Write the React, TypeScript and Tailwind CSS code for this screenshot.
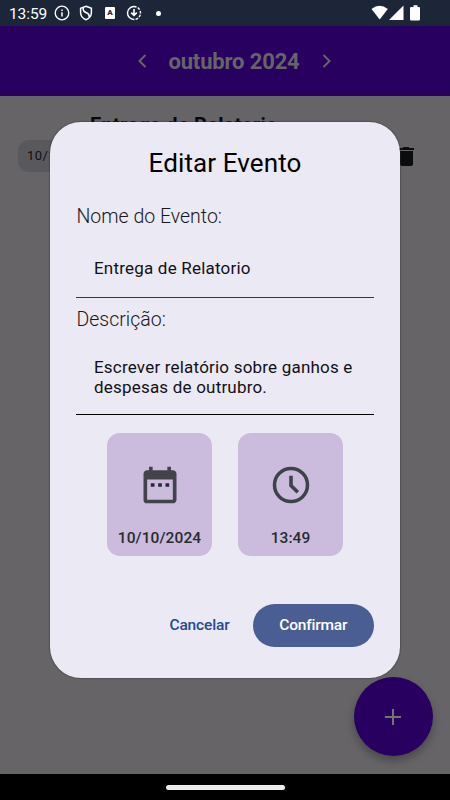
import React from "react";

function StatusBar() {
  return (
    <header className="flex h-[26px] w-full shrink-0 items-center bg-[#1d2639] pl-[9px] text-white">
      <span className="w-[38px] whitespace-nowrap pt-[2px] text-[15.5px] leading-[24px] tracking-[-0.1px]">13:59</span>
      <svg className="ml-[7px] h-4 w-4" viewBox="0 0 16 16" fill="none" stroke="currentColor">
        <circle cx="8" cy="8" r="6.8" strokeWidth="1.3" />
        <path d="M8 7.2v4.2M8 4.4v1.5" strokeWidth="1.5" />
      </svg>
      <svg className="ml-2 h-4 w-4" viewBox="0 0 16 16" fill="none" stroke="currentColor" strokeWidth="1.5">
        <path d="M8 1.2 13.4 3.2v4.2c0 3.5-2.3 6-5.4 7.4-3.1-1.4-5.4-3.9-5.4-7.4V3.2z" />
        <path d="M5.200 2.500c-.3 3 .8 4.500 3.300 5.300 2 .7 2.800 2 2.800 4.200" />
      </svg>
      <span className="ml-[11px] flex h-3 w-[10px] justify-center rounded-[1px] bg-white pt-[2px] text-[8px] font-black leading-[8px] text-[#1d2639]">A</span>
      <svg className="ml-[11px] h-4 w-4" viewBox="0 0 16 16" fill="none" stroke="currentColor">
        <path d="M8 1.500a6.500 6.500 0 0 0 0 13" strokeWidth="1.400" />
        <path d="M8 1.500a6.500 6.500 0 0 1 0 13" strokeWidth="1.400" strokeDasharray="2.600 1.300" />
        <path d="M8 4v6.500M5.200 7.600 8 10.400 10.800 7.600" strokeWidth="1.600" />
      </svg>
      <i className="ml-[14px] h-[5px] w-[5px] rounded-full bg-white" />
      <svg className="ml-auto mr-[26px] h-[18px] w-[54px]" viewBox="0 0 54 18" fill="currentColor">
        <path d="M1.500 5Q9.500-1.400 17.800 5L9.700 15.500z" />
        <path d="M19 16 33.500 1.500V16z" />
        <path d="M41 3h2.500V1.200h4V3H49q1 0 1 1v11.500q0 1-1 1h-8q-1 0-1-1V4q0-1 1-1z" />
      </svg>
    </header>
  );
}

function CalendarIcon() {
  return (
    <svg className="ml-px h-11 w-11" viewBox="0 0 24 24" fill="#42434d">
      <path d="M7 11h2v2H7zm4 0h2v2h-2zm4 0h2v2h-2z" fill="#222b31" />
      <path d="M19 4h-1V2h-2v2H8V2H6v2H5c-1.110 0-1.990.9-1.990 2L3 20a2 2 0 0 0 2 2h14c1.100 0 2-.9 2-2V6c0-1.100-.9-2-2-2m0 16H5V9h14z" />
    </svg>
  );
}

function ClockIcon() {
  return (
    <svg className="ml-px h-11 w-11" viewBox="0 0 44 44" fill="none" stroke="#3d434a">
      <circle cx="22" cy="22" r="16.500" strokeWidth="3.500" />
      <path d="M22 12.800v9.600l6.800 6.800" strokeWidth="3.600" />
    </svg>
  );
}

function PickerTile({ icon, label }: { icon: React.ReactNode; label: string }) {
  return (
    <button className="flex h-[123px] w-[105px] flex-col items-center rounded-[13px] bg-[#cbbbdc] pt-[30.500px] text-[#272c31]">
      {icon}
      <span className="mt-[20.500px] whitespace-nowrap pl-px text-[15.500px] font-medium leading-5 tracking-[0.08px]">{label}</span>
    </button>
  );
}

function EditDialog() {
  return (
    <section className="absolute left-[50px] top-[122px] flex h-[556px] w-[350px] flex-col rounded-[31px] bg-[#ebe9f3] px-[26px] pt-[25px] text-black shadow-[0_0_1px_1px_rgba(45,45,45,0.35)]">
      <h2 className="text-center text-[26px] font-normal leading-8 tracking-[0.1px]">Editar Evento</h2>
      <label className="mt-[26px] pl-[0.500px] text-[19.500px] font-light leading-6 text-[#18181c]">Nome do Evento:</label>
      <div className="flex h-[69px] items-center border-b border-[#36353f] pl-[18px] pt-[9px] text-[17px] leading-5 tracking-[0.2px] text-[#111116]">
        Entrega de Relatorio
      </div>
      <label className="mt-[10px] pl-[0.500px] text-[19.500px] font-light leading-6 text-[#18181c]">Descrição:</label>
      <div className="h-[83px] whitespace-pre-line border-b border-black pl-[18px] pt-[25px] text-[17px] leading-5 tracking-[0.2px] text-[#111116]">
        {"Escrever relatório sobre ganhos e\ndespesas de outrubro."}
      </div>
      <div className="mt-[17.500px] flex justify-center gap-[26px] pr-px">
        <PickerTile icon={<CalendarIcon />} label="10/10/2024" />
        <PickerTile icon={<ClockIcon />} label="13:49" />
      </div>
      <div className="mt-[48px] flex items-center justify-end gap-[23px]">
        <button className="pt-px text-[15.500px] font-medium tracking-[-0.15px] text-[#244a90]">Cancelar</button>
        <button className="h-[43.500px] w-[121.500px] rounded-full bg-[#4a5e94] pt-px text-[15.500px] font-medium tracking-[-0.2px] text-white">Confirmar</button>
      </div>
    </section>
  );
}

export default function App() {
  return (
    <div className="relative flex h-[800px] w-[450px] flex-col overflow-hidden bg-[#666466] font-[Roboto,sans-serif]">
      <StatusBar />
      <nav className="flex h-[70px] shrink-0 items-center justify-center gap-[14px] bg-[#28005f] pl-[18px] text-[#666466]">
        <svg className="h-6 w-6" viewBox="0 0 24 24" fill="none" stroke="currentColor" strokeWidth="2">
          <path d="m15.500 6-6 6 6 6" />
        </svg>
        <h1 className="whitespace-nowrap pt-px text-[22px] font-bold leading-7 tracking-[-0.15px]">outubro 2024</h1>
        <svg className="h-6 w-6" viewBox="0 0 24 24" fill="none" stroke="currentColor" strokeWidth="2">
          <path d="m9.500 6 6 6-6 6" />
        </svg>
      </nav>
      <main className="flex grow flex-col pl-[18px] pt-[17px]">
        <h2 className="pl-[72px] text-[20px] font-bold leading-6 tracking-[0.25px] text-[#08080a]">Entrega de Relatorio</h2>
        <div className="flex items-start pt-[3px]">
          <span className="h-[32px] w-[100px] rounded-[11px] bg-[#59595d] pl-[9px] text-[13px] leading-8 tracking-[0.4px] text-[#101012]">10/10/2024</span>
          <svg className="ml-[276px] mt-[4px] h-6 w-6" viewBox="0 0 24 24" fill="#0b0c0e">
            <path d="M6 7h13v13q0 2-2 2H8q-2 0-2-2zM5 4h3.500l1-1h5l1 1H20v2H5z" />
          </svg>
        </div>
      </main>
      <footer className="flex h-[26px] shrink-0 items-center justify-center bg-black">
        <i className="h-[5px] w-[119px] rounded-full bg-[#ececec]" />
      </footer>
      <button className="absolute left-[354px] top-[677px] flex h-[79px] w-[79px] items-center justify-center rounded-full bg-[#28005f] shadow-[0_5px_9px_rgba(0,0,0,0.28)]">
        <svg className="mr-px h-4 w-4" viewBox="0 0 16 16" fill="none" stroke="#77736f" strokeWidth="2">
          <path d="M8 0v16M0 8h16" />
        </svg>
      </button>
      <EditDialog />
    </div>
  );
}
